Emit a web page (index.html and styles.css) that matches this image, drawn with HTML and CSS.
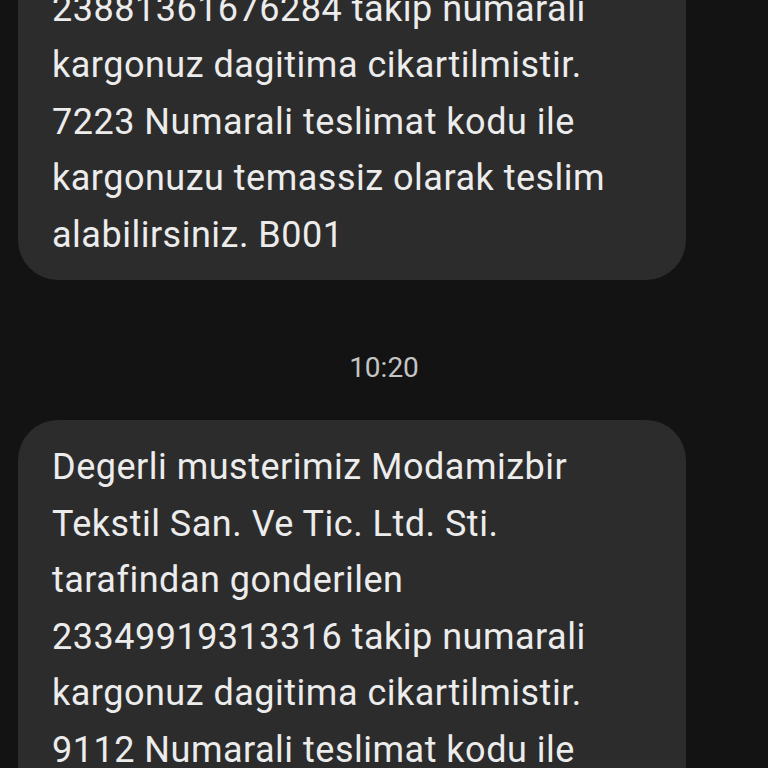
FILE: index.html
```html
<!DOCTYPE html>
<html lang="tr">
<head>
    <meta charset="UTF-8">
    <meta name="viewport" content="width=device-width, initial-scale=1.0">
    <title>Mesajlar</title>
    <link rel="stylesheet" href="styles.css">
</head>
<body>
    <!-- Mesaj listesi (yukari kaydirilmis) -->
    <div class="thread">
        <div class="bubble">
            Degerli musterimiz Modamizbir<br>
            Tekstil San. Ve Tic. Ltd. Sti.<br>
            tarafindan gonderilen<br>
            23881361676284 takip numarali<br>
            kargonuz dagitima cikartilmistir.<br>
            7223 Numarali teslimat kodu ile<br>
            kargonuzu temassiz olarak teslim<br>
            alabilirsiniz. B001
        </div>

        <div class="stamp">10:20</div>

        <div class="bubble">
            Degerli musterimiz Modamizbir<br>
            Tekstil San. Ve Tic. Ltd. Sti.<br>
            tarafindan gonderilen<br>
            23349919313316 takip numarali<br>
            kargonuz dagitima cikartilmistir.<br>
            9112 Numarali teslimat kodu ile<br>
            kargonuzu temassiz olarak teslim<br>
            alabilirsiniz. B001
        </div>
    </div>
</body>
</html>
```

FILE: styles.css
```css
/* Seite */
body {
    margin: 0;
    height: 100vh;
    overflow: hidden;
    background-color: #131313;
    font-family: 'Roboto', 'Noto Sans', sans-serif;
}

/* Nachrichtenverlauf */
.thread {
    display: flex;
    flex-direction: column;
    align-items: flex-start;
    margin-top: -208px;
    padding: 0 18px;
}

.bubble {
    box-sizing: border-box;
    width: 668px;
    padding: 19px 34px 17px;
    border-radius: 40px;
    background-color: #2c2c2c;
    color: #ececec;
    font-size: 36px;
    line-height: 56.5px;
    letter-spacing: 0.5px;
    white-space: nowrap;
}

/* Zeitstempel */
.stamp {
    align-self: stretch;
    margin: 68px -18px 32px;
    text-align: center;
    color: #c4c4c4;
    font-size: 28px;
    line-height: 40px;
}
```
